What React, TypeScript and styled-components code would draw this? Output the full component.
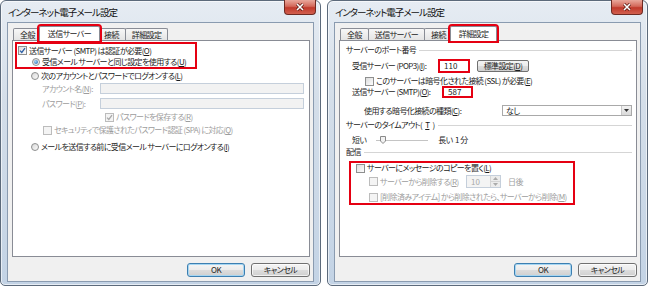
import React from 'react'
import styled, { createGlobalStyle, css } from 'styled-components'

const GlobalStyle = createGlobalStyle`
  body {
    margin: 0;
    background: #fff;
    font-family: 'Noto Sans CJK JP', 'Noto Sans', sans-serif;
    font-size: 8px;
    letter-spacing: -0.6px;
    color: #1b1b1b;
    font-feature-settings: 'palt';
  }
  u { text-underline-offset: 1px; }
`

const RED = '#e50012'

const Page = styled.div`
  display: flex;
  gap: 6px;
`

const Frame = styled.div`
  width: 321px;
  height: 286px;
  box-sizing: border-box;
  border: 1px solid #5c6a7b;
  border-radius: 6px 6px 5px 5px;
  background: linear-gradient(180deg, #e6ecf3 0%, #d4dee9 35%, #c3d3e5 100%);
  box-shadow: inset 0 0 0 1px rgba(255, 255, 255, 0.6);
  display: flex;
  flex-direction: column;
  padding: 0 6px 3px;
`

const TitleBar = styled.div`
  height: 21px;
  display: flex;
  justify-content: space-between;
  align-items: flex-start;
`

const Title = styled.div`
  padding: 6px 0 0 1px;
  font-size: 9.5px;
  line-height: 11px;
  color: #111;
  letter-spacing: -1px;
`

const CloseButton = styled.div`
  width: 32px;
  height: 15px;
  margin: -1px -2px 0 0;
  box-sizing: border-box;
  border: 1px solid #6e2a22;
  border-top: none;
  border-radius: 0 0 4px 4px;
  background: linear-gradient(180deg, #e9a89c 0%, #d3685a 45%, #c0392b 55%, #d2604f 100%);
  display: flex;
  align-items: center;
  justify-content: center;
`

const Body = styled.div`
  flex: 1;
  background: #f0f0f0;
  border: 1px solid #8a9bb0;
  padding: 3px 3px 0 4px;
  display: flex;
  flex-direction: column;
`

const Tabs = styled.div`
  display: flex;
  align-items: flex-start;
  height: 15px;
  margin-bottom: -1px;
  padding-left: 1px;
  position: relative;
  z-index: 1;
`

const Tab = styled.div<{ $active?: boolean; $marked?: boolean }>`
  box-sizing: border-box;
  height: 12px;
  margin-top: 2px;
  margin-right: -1px;
  padding: 0 6px;
  border: 1px solid #898c95;
  border-bottom: none;
  border-radius: 2px 2px 0 0;
  background: linear-gradient(180deg, #f7f7f7, #e4e4e4);
  display: flex;
  align-items: center;
  line-height: 1;
  white-space: nowrap;
  ${p => p.$active && css`
    height: 15px;
    margin-top: 0;
    margin-left: -2px;
    margin-right: -3px;
    padding: 0 8px;
    background: #fff;
    position: relative;
    z-index: 1;
  `}
  ${p => p.$marked && css`
    outline: 2px solid ${RED};
  `}
`

const Panel = styled.div`
  height: 217px;
  box-sizing: border-box;
  background: #fff;
  border: 1px solid #898c95;
  display: flex;
  flex-direction: column;
`

const ButtonRow = styled.div`
  display: flex;
  justify-content: flex-end;
  gap: 6px;
  margin-top: 6px;
`

const Button = styled.div<{ $w: number; $default?: boolean }>`
  width: ${p => p.$w}px;
  height: 14px;
  box-sizing: border-box;
  border: 1px solid ${p => (p.$default ? '#3c7fb1' : '#707070')};
  border-radius: 3px;
  background: linear-gradient(180deg, #f4f4f4 0%, #ebebeb 50%, #dddddd 50%, #cfcfcf 100%);
  box-shadow: inset 0 0 0 1px ${p => (p.$default ? '#a6d6f2' : 'rgba(255,255,255,0.7)')};
  display: flex;
  align-items: center;
  justify-content: center;
  line-height: 1;
`

const Row = styled.div<{ $h: number; $top?: number; $indent?: number }>`
  display: flex;
  align-items: center;
  height: ${p => p.$h}px;
  margin-top: ${p => p.$top ?? 0}px;
  padding-left: ${p => p.$indent ?? 0}px;
  white-space: nowrap;
  line-height: 1;
`

const Marked = styled.div<{ $w: number; $h: number; $top?: number; $left?: number }>`
  width: ${p => p.$w}px;
  height: ${p => p.$h}px;
  box-sizing: border-box;
  margin-top: ${p => p.$top ?? 0}px;
  margin-left: ${p => p.$left ?? 0}px;
  border: 2px solid ${RED};
  display: flex;
  flex-direction: column;
`

const Text = styled.span<{ $disabled?: boolean; $w?: number; $gap?: number }>`
  color: ${p => (p.$disabled ? '#9d9d9d' : 'inherit')};
  margin-left: ${p => p.$gap ?? 2}px;
  ${p => p.$w !== undefined && css`width: ${p.$w}px; flex: none;`}
`

const Box = styled.span<{ $disabled?: boolean }>`
  width: 9px;
  height: 9px;
  box-sizing: border-box;
  flex: none;
  border: 1px solid ${p => (p.$disabled ? '#bcbcbc' : '#8e8f8f')};
  background: ${p => (p.$disabled ? '#f4f4f4' : 'linear-gradient(135deg, #dcdcdc, #fdfdfd)')};
  display: flex;
  align-items: center;
  justify-content: center;
`

const Radio = styled.span<{ $on?: boolean }>`
  width: 8px;
  height: 8px;
  box-sizing: border-box;
  flex: none;
  border-radius: 50%;
  border: 1px solid #8e8f8f;
  background: linear-gradient(135deg, #d8d8d8, #fbfbfb);
  display: flex;
  align-items: center;
  justify-content: center;
  &::after {
    content: '';
    display: ${p => (p.$on ? 'block' : 'none')};
    width: 4px;
    height: 4px;
    border-radius: 50%;
    background: radial-gradient(circle at 35% 35%, #9fd3f7, #1f5fa8);
  }
`

const Field = styled.div<{ $w: number; $h: number; $disabled?: boolean; $marked?: boolean; $left?: number }>`
  width: ${p => p.$w}px;
  height: ${p => p.$h}px;
  box-sizing: border-box;
  flex: none;
  margin-left: ${p => p.$left ?? 0}px;
  border: ${p => (p.$marked ? `2px solid ${RED}` : p.$disabled ? '1px solid #c5cfdb' : '1px solid #abadb3')};
  background: ${p => (p.$disabled ? '#f2f2f2' : '#fff')};
  display: flex;
  align-items: center;
  padding-left: 4px;
  color: ${p => (p.$disabled ? '#a0a0a0' : '#1b1b1b')};
  letter-spacing: 0;
  line-height: 1;
`

const SmallButton = styled.div<{ $w: number; $left?: number }>`
  width: ${p => p.$w}px;
  height: 12px;
  box-sizing: border-box;
  margin-left: ${p => p.$left ?? 0}px;
  border: 1px solid #707070;
  border-radius: 2px;
  background: linear-gradient(180deg, #f4f4f4 0%, #ebebeb 50%, #dddddd 50%, #cfcfcf 100%);
  display: flex;
  align-items: center;
  justify-content: center;
  line-height: 1;
`

const Group = styled.div<{ $top?: number }>`
  display: flex;
  align-items: center;
  gap: 3px;
  height: 10px;
  margin-top: ${p => p.$top ?? 0}px;
  padding: 0 4px 0 6px;
  white-space: nowrap;
  line-height: 1;
  &::after {
    content: '';
    flex: 1;
    height: 1px;
    background: #d5d5d5;
    box-shadow: 0 1px 0 #fff;
  }
`

const Select = styled.div<{ $w: number; $left?: number }>`
  width: ${p => p.$w}px;
  height: 11px;
  box-sizing: border-box;
  margin-left: ${p => p.$left ?? 0}px;
  border: 1px solid #a9a9a9;
  background: #fff;
  display: flex;
  align-items: center;
  justify-content: space-between;
  padding-left: 3px;
  line-height: 1;
`

const SelectArrow = styled.span`
  width: 10px;
  height: 9px;
  box-sizing: border-box;
  border-left: 1px solid #c8c8c8;
  background: linear-gradient(180deg, #f2f2f2, #d9d9d9);
  display: flex;
  align-items: center;
  justify-content: center;
`

const Slider = styled.div<{ $w: number }>`
  width: ${p => p.$w}px;
  height: 8px;
  margin: 0 10px;
  display: flex;
  align-items: center;
  position: relative;
  &::before {
    content: '';
    flex: 1;
    height: 1px;
    background: #c4c4c4;
  }
`

const SliderThumb = styled.svg`
  position: absolute;
  left: 4px;
  top: 0;
`

const Spinner = styled.div<{ $left?: number }>`
  width: 35px;
  height: 13px;
  box-sizing: border-box;
  margin-left: ${p => p.$left ?? 0}px;
  border: 1px solid #c5cfdb;
  background: #f4f4f4;
  display: flex;
  align-items: stretch;
  color: #a8a8a8;
  letter-spacing: 0;
  line-height: 1;
`

const SpinValue = styled.span`
  flex: 1;
  display: flex;
  align-items: center;
  padding-left: 4px;
`

const SpinButtons = styled.span`
  width: 9px;
  display: flex;
  flex-direction: column;
  border-left: 1px solid #d4d4d4;
  & > span {
    flex: 1;
    display: flex;
    align-items: center;
    justify-content: center;
    background: #ececec;
  }
  & > span + span {
    border-top: 1px solid #d4d4d4;
  }
`

const Check = ({ color }: { color: string }) => (
  <svg width="7" height="7" viewBox="0 0 7 7">
    <path d="M1 3.6 L2.8 5.4 L6 1.2" fill="none" stroke={color} strokeWidth="1.3" />
  </svg>
)

const Tri = ({ up, color = '#333' }: { up?: boolean; color?: string }) => (
  <svg width="5" height="3" viewBox="0 0 5 3">
    <path d={up ? 'M0 3 L2.5 0 L5 3 Z' : 'M0 0 L5 0 L2.5 3 Z'} fill={color} />
  </svg>
)

const TABS = ['全般', '送信サーバー', '接続', '詳細設定']

const Window: React.FC<{ active: number; children: React.ReactNode }> = ({ active, children }) => (
  <Frame>
    <TitleBar>
      <Title>インターネット電子メール設定</Title>
      <CloseButton>
        <svg width="10" height="8" viewBox="0 0 10 8">
          <path d="M2 1 L8 7 M8 1 L2 7" stroke="#5a1810" strokeWidth="3" />
          <path d="M2 1 L8 7 M8 1 L2 7" stroke="#fff" strokeWidth="1.6" />
        </svg>
      </CloseButton>
    </TitleBar>
    <Body>
      <Tabs>
        {TABS.map((t, i) => (
          <Tab key={t} $active={i === active} $marked={i === active}>{t}</Tab>
        ))}
      </Tabs>
      <Panel>{children}</Panel>
      <ButtonRow>
        <Button $w={58} $default>OK</Button>
        <Button $w={59}>キャンセル</Button>
      </ButtonRow>
    </Body>
  </Frame>
)

const SendServerTab = () => (
  <>
    <Marked $w={182} $h={27} $top={1} $left={2}>
      <Row $h={11} $top={1} $indent={1}>
        <Box><Check color="#2b5fa5" /></Box>
        <Text>送信サーバー (SMTP) は認証が必要(<u>O</u>)</Text>
      </Row>
      <Row $h={11} $indent={15}>
        <Radio $on />
        <Text>受信メール サーバーと同じ設定を使用する(<u>U</u>)</Text>
      </Row>
    </Marked>
    <Row $h={12} $top={1} $indent={18}>
      <Radio />
      <Text>次のアカウントとパスワードでログオンする(<u>L</u>)</Text>
    </Row>
    <Row $h={11} $top={1} $indent={29}>
      <Text $disabled $gap={0} $w={58}>アカウント名(<u>N</u>):</Text>
      <Field $w={204} $h={11} $disabled />
    </Row>
    <Row $h={11} $top={4} $indent={29}>
      <Text $disabled $gap={0} $w={58}>パスワード(<u>P</u>):</Text>
      <Field $w={204} $h={11} $disabled />
    </Row>
    <Row $h={10} $top={3} $indent={92}>
      <Box $disabled><Check color="#a8a8a8" /></Box>
      <Text $disabled>パスワードを保存する(<u>R</u>)</Text>
    </Row>
    <Row $h={10} $top={3} $indent={30}>
      <Box $disabled />
      <Text $disabled>セキュリティで保護されたパスワード認証 (SPA) に対応(<u>Q</u>)</Text>
    </Row>
    <Row $h={12} $top={6} $indent={18}>
      <Radio />
      <Text>メールを送信する前に受信メール サーバーにログオンする(<u>I</u>)</Text>
    </Row>
  </>
)

const AdvancedTab = () => (
  <>
    <Group $top={4}>サーバーのポート番号</Group>
    <Row $h={14} $top={4} $indent={12}>
      <Text $gap={0} $w={86}>受信サーバー (POP3)(<u>I</u>):</Text>
      <Field $w={32} $h={14} $marked>110</Field>
      <SmallButton $w={52} $left={7}>標準設定(<u>D</u>)</SmallButton>
    </Row>
    <Row $h={10} $top={3} $indent={25}>
      <Box />
      <Text>このサーバーは暗号化された接続 (SSL) が必要(<u>E</u>)</Text>
    </Row>
    <Row $h={12} $indent={12}>
      <Text $gap={0} $w={90}>送信サーバー (SMTP)(<u>O</u>):</Text>
      <Field $w={31} $h={12} $marked>587</Field>
    </Row>
    <Row $h={11} $top={7} $indent={24}>
      <Text $gap={0} $w={138}>使用する暗号化接続の種類(<u>C</u>):</Text>
      <Select $w={130}>
        なし
        <SelectArrow><Tri /></SelectArrow>
      </Select>
    </Row>
    <Group $top={4}>サーバーのタイムアウト(<u>T</u>)</Group>
    <Row $h={10} $top={5} $indent={12}>
      <Text $gap={0}>短い</Text>
      <Slider $w={52}>
        <SliderThumb width="6" height="8" viewBox="0 0 6 8">
          <path d="M0.5 0.5 H5.5 V5 L3 7.5 L0.5 5 Z" fill="#f2f2f2" stroke="#8a8a8a" />
        </SliderThumb>
      </Slider>
      <Text $gap={0}>長い&nbsp;&nbsp;1 分</Text>
    </Row>
    <Group $top={2}>配信</Group>
    <Marked $w={226} $h={44} $top={4} $left={9}>
      <Row $h={10} $indent={5}>
        <Box />
        <Text>サーバーにメッセージのコピーを置く(<u>L</u>)</Text>
      </Row>
      <Row $h={13} $top={2} $indent={18}>
        <Box $disabled />
        <Text $disabled $w={86}>サーバーから削除する(<u>R</u>)</Text>
        <Spinner>
          <SpinValue>10</SpinValue>
          <SpinButtons>
            <span><Tri up color="#aaa" /></span>
            <span><Tri color="#aaa" /></span>
          </SpinButtons>
        </Spinner>
        <Text $disabled $gap={7}>日後</Text>
      </Row>
      <Row $h={10} $top={4} $indent={18}>
        <Box $disabled />
        <Text $disabled>[削除済みアイテム] から削除されたら、サーバーから削除(<u>M</u>)</Text>
      </Row>
    </Marked>
  </>
)

export default function App() {
  return (
    <>
      <GlobalStyle />
      <Page>
        <Window active={1}>
          <SendServerTab />
        </Window>
        <Window active={3}>
          <AdvancedTab />
        </Window>
      </Page>
    </>
  )
}
